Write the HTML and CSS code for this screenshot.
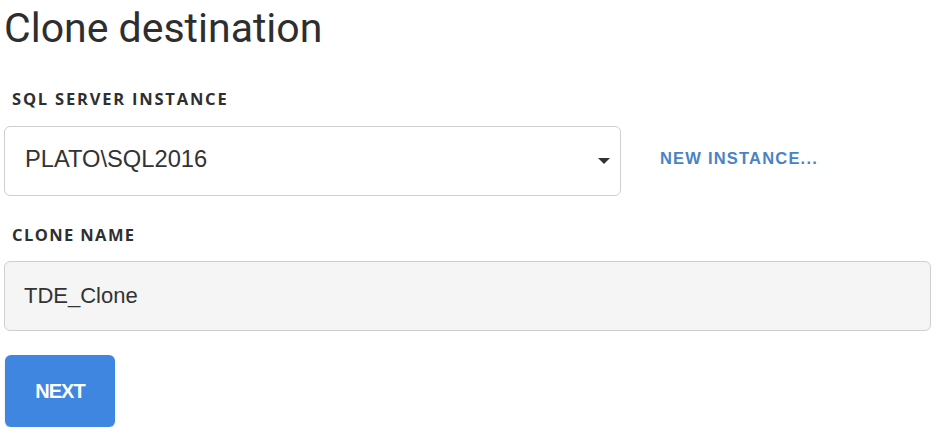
FILE: index.html
```html
<!DOCTYPE html>
<html>
<head>
<meta charset="utf-8">
<link rel="stylesheet" href="styles.css">
</head>
<body>
<div class="page">
  <h1 class="title">Clone destination</h1>
  <div class="field">
    <div class="label">SQL SERVER INSTANCE</div>
    <div class="row">
      <div class="select">
        <span class="value">PLATO\SQL2016</span>
        <span class="caret"></span>
      </div>
      <a class="link">NEW INSTANCE...</a>
    </div>
  </div>
  <div class="field">
    <div class="label">CLONE NAME</div>
    <div class="input"><span class="value">TDE_Clone</span></div>
  </div>
  <button class="btn">NEXT</button>
</div>
</body>
</html>
```
FILE: styles.css
```css
html, body {
  margin: 0;
  padding: 0;
  background: #fff;
}
.page {
  padding: 4px 12px 0 4px;
  font-family: Roboto, "Liberation Sans", sans-serif;
  color: #333;
}
.title {
  margin: 0 0 0 0;
  font-weight: 400;
  font-size: 41px;
  line-height: 48px;
  color: #2e2e2e;
}
.label {
  margin: 37px 0 0 8px;
  font-family: "Open Sans", "Liberation Sans", sans-serif;
  font-weight: 700;
  font-size: 16.5px;
  letter-spacing: 1.8px;
  line-height: 20px;
  color: #2f2f2f;
}
.field + .field .label {
  margin-top: 29px;
  letter-spacing: 1.4px;
}
.row {
  display: flex;
  align-items: center;
  margin-top: 17px;
}
.select, .input {
  box-sizing: border-box;
  height: 70px;
  border: 1px solid #cfcfcf;
  border-radius: 6px;
  display: flex;
  align-items: center;
  padding-left: 20px;
  font-family: "Liberation Sans", Arial, sans-serif;
  color: #333;
}
.select {
  width: 617px;
  background: #fff;
  position: relative;
  font-size: 23.7px;
  padding-bottom: 3px;
}
.caret {
  position: absolute;
  right: 10px;
  top: 31px;
  width: 0;
  height: 0;
  border-left: 6px solid transparent;
  border-right: 6px solid transparent;
  border-top: 6px solid #333;
}
.link {
  margin-left: 39px;
  margin-bottom: 5px;
  font-family: "Liberation Sans", Arial, sans-serif;
  font-weight: 700;
  font-size: 16.5px;
  letter-spacing: 1.2px;
  color: #4a82c6;
}
.input {
  margin-top: 16px;
  width: 927px;
  background: #f5f5f5;
  font-size: 22px;
  padding-left: 19px;
}
.btn {
  margin: 24px 0 0 1px;
  width: 110px;
  height: 72px;
  border: none;
  border-radius: 6px;
  background: #3f86e0;
  color: #fff;
  font-family: "Liberation Sans", Arial, sans-serif;
  font-weight: 700;
  font-size: 20px;
  letter-spacing: -1px;
  box-shadow: 0 1px 2px rgba(0,0,0,0.15);
}
```
